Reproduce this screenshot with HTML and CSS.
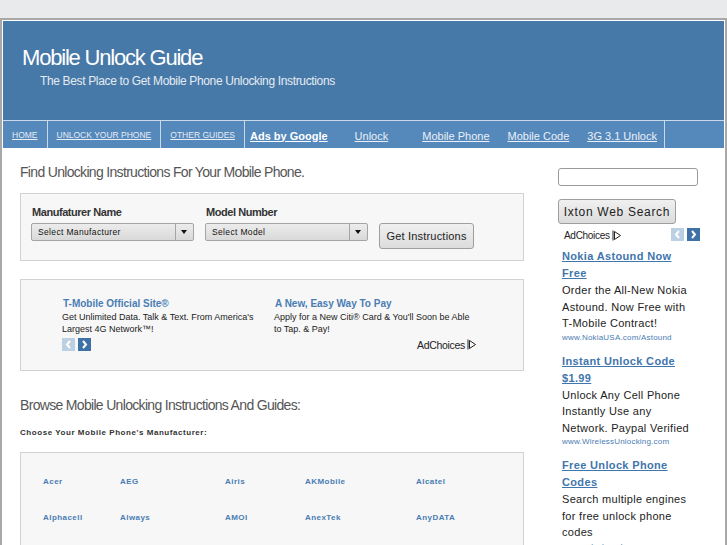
FILE: index.html
```html
<!DOCTYPE html>
<html>
<head>
<meta charset="utf-8">
<link rel="stylesheet" href="styles.css">
</head>
<body>
<div class="wrap">
  <div class="header">
    <div class="site-title">Mobile Unlock Guide</div>
    <div class="site-sub">The Best Place to Get Mobile Phone Unlocking Instructions</div>
  </div>
  <div class="nav">
    <a class="nav-item cap" href="#">HOME</a>
    <a class="nav-item cap" href="#">UNLOCK YOUR PHONE</a>
    <a class="nav-item cap" href="#">OTHER GUIDES</a>
    <div class="nav-ads">
      <a class="ads-label" href="#">Ads by Google</a>
      <a class="ad-link l1" href="#">Unlock</a>
      <a class="ad-link l2" href="#">Mobile Phone</a>
      <a class="ad-link" href="#">Mobile Code</a>
      <a class="ad-link" href="#">3G 3.1 Unlock</a>
    </div>
  </div>
  <div class="content">
    <div class="main">
      <h2 class="heading">Find Unlocking Instructions For Your Mobile Phone.</h2>
      <div class="box form-box">
        <div class="field">
          <div class="label">Manufaturer Name</div>
          <div class="select"><span>Select Manufacturer</span><i class="sel-arrow"></i></div>
        </div>
        <div class="field">
          <div class="label">Model Number</div>
          <div class="select"><span>Select Model</span><i class="sel-arrow"></i></div>
        </div>
        <button class="btn get-btn">Get Instructions</button>
      </div>

      <div class="box ad-box">
        <div class="ads-row">
          <div class="ad">
            <div class="ad-title">T-Mobile Official Site®</div>
            <div class="ad-text">Get Unlimited Data. Talk &amp; Text. From America's<br>Largest 4G Network™!</div>
          </div>
          <div class="ad ad2">
            <div class="ad-title">A New, Easy Way To Pay</div>
            <div class="ad-text">Apply for a New Citi® Card &amp; You'll Soon be Able<br>to Tap. &amp; Pay!</div>
          </div>
        </div>
        <div class="ad-foot">
          <div class="arrows">
            <span class="arr prev"><svg width="13" height="13" viewBox="0 0 13 13"><path d="M8 3 L5 6.5 L8 10" fill="none" stroke="#fff" stroke-width="2"/></svg></span>
            <span class="arr next"><svg width="13" height="13" viewBox="0 0 13 13"><path d="M5 3 L8 6.5 L5 10" fill="none" stroke="#fff" stroke-width="2"/></svg></span>
          </div>
          <div class="adchoices">AdChoices <svg width="10" height="11" viewBox="0 0 10 11"><path d="M1 0.5 V10.5 M2.5 1.5 L8.5 5.5 L2.5 9.5 Z" fill="none" stroke="#222" stroke-width="1"/></svg></div>
        </div>
      </div>

      <h2 class="heading browse">Browse Mobile Unlocking Instructions And Guides:</h2>
      <div class="choose">Choose Your Mobile Phone's Manufacturer:</div>
      <div class="box brands">
        <a href="#">Acer</a><a href="#">AEG</a><a href="#">Airis</a><a href="#">AKMobile</a><a href="#">Alcatel</a>
        <a href="#">Alphacell</a><a href="#">Always</a><a href="#">AMOI</a><a href="#">AnexTek</a><a href="#">AnyDATA</a>
      </div>
    </div>

    <div class="side">
      <div class="search-input"></div>
      <button class="btn search-btn">Ixton Web Search</button>
      <div class="side-choices">
        <div class="adchoices">AdChoices <svg width="10" height="11" viewBox="0 0 10 11"><path d="M1 0.5 V10.5 M2.5 1.5 L8.5 5.5 L2.5 9.5 Z" fill="none" stroke="#222" stroke-width="1"/></svg></div>
        <div class="arrows">
          <span class="arr prev"><svg width="13" height="13" viewBox="0 0 13 13"><path d="M8 3 L5 6.5 L8 10" fill="none" stroke="#fff" stroke-width="2"/></svg></span>
          <span class="arr next"><svg width="13" height="13" viewBox="0 0 13 13"><path d="M5 3 L8 6.5 L5 10" fill="none" stroke="#fff" stroke-width="2"/></svg></span>
        </div>
      </div>
      <div class="sad">
        <a class="sad-title" href="#">Nokia Astound Now Free</a>
        <div class="sad-text">Order the All-New Nokia Astound. Now Free with T-Mobile Contract!</div>
        <div class="sad-url">www.NokiaUSA.com/Astound</div>
      </div>
      <div class="sad">
        <a class="sad-title" href="#">Instant Unlock Code $1.99</a>
        <div class="sad-text">Unlock Any Cell Phone Instantly Use any Network. Paypal Verified</div>
        <div class="sad-url">www.WirelessUnlocking.com</div>
      </div>
      <div class="sad">
        <a class="sad-title" href="#">Free Unlock Phone Codes</a>
        <div class="sad-text">Search multiple engines for free unlock phone codes</div>
        <div class="sad-url">www.unlock-codes.com</div>
      </div>
    </div>
  </div>
</div>
</body>
</html>
```
FILE: styles.css
```css
html, body {
  margin: 0;
  padding: 0;
}
body {
  background: #e9eaec;
  font-family: "Liberation Sans", Arial, sans-serif;
  height: 545px;
  overflow: hidden;
}
.wrap {
  margin-top: 18px;
  border: 2px solid #a8a8a8;
  border-bottom: none;
  padding: 1px;
  background: #fff;
  min-height: 600px;
}
.header {
  background: #4779a8;
  height: 99px;
  box-sizing: border-box;
  padding-top: 24px;
}
.site-title {
  color: #fff;
  font-size: 22px;
  line-height: 26px;
  letter-spacing: -1.2px;
  padding-left: 19px;
}
.site-sub {
  color: #e4ebf2;
  font-size: 12px;
  line-height: 14px;
  letter-spacing: -0.35px;
  margin-top: 3px;
  padding-left: 37px;
}
.nav {
  display: flex;
  background: #5588bb;
  border-top: 1px solid #c9d9ea;
  height: 27px;
  align-items: stretch;
}
.nav-item {
  display: flex;
  align-items: center;
  color: #e6edf5;
  font-size: 8.5px;
  padding: 0 9px;
  border-right: 1px solid #c9d9ea;
  text-decoration: underline;
}
.nav-ads {
  display: flex;
  align-items: center;
  padding-left: 5px;
  padding-right: 7px;
  border-right: 1px solid #c9d9ea;
}
.ads-label {
  color: #fff;
  font-weight: bold;
  font-size: 11px;
  text-decoration: underline;
  margin-right: 27px;
  margin-top: 2px;
}
.ad-link {
  color: #eaf0f6;
  font-size: 11px;
  text-decoration: underline;
  margin-right: 18px;
  margin-top: 2px;
}
.ad-link:last-child { margin-right: 0; }
.ad-link.l1 { margin-right: 34px; }
.content {
  display: flex;
  padding-left: 17px;
  align-items: flex-start;
}
.main {
  width: 504px;
  padding-top: 15px;
}
.heading {
  margin: 0;
  font-weight: normal;
  font-size: 14px;
  line-height: 18px;
  color: #555;
  letter-spacing: -0.68px;
}
.box {
  border: 1px solid #d2d2d2;
  background: #f7f7f7;
}
.form-box {
  margin-top: 12px;
  display: flex;
  align-items: flex-start;
  padding: 11px 10px 11px 10px;
  gap: 11px;
}
.label {
  font-size: 11px;
  font-weight: bold;
  line-height: 14px;
  color: #333;
  letter-spacing: -0.45px;
  padding-left: 1px;
}
.select {
  margin-top: 4px;
  width: 163px;
  height: 18px;
  box-sizing: border-box;
  border: 1px solid #a5a5a5;
  border-radius: 2px;
  background: linear-gradient(#ececec, #d9d9d9);
  display: flex;
  align-items: center;
  position: relative;
  font-size: 8.5px;
  color: #111;
  letter-spacing: 0.35px;
}
.select span { padding-left: 6px; }
.sel-arrow {
  position: absolute;
  right: 0;
  top: 0;
  bottom: 0;
  width: 17px;
  border-left: 1px solid #a5a5a5;
}
.sel-arrow::after {
  content: "";
  position: absolute;
  left: 5px;
  top: 6px;
  border-left: 3.5px solid transparent;
  border-right: 3.5px solid transparent;
  border-top: 4px solid #111;
}
.btn {
  font-family: "Liberation Sans", Arial, sans-serif;
  background: linear-gradient(#f0f0f0, #dcdcdc);
  border: 1px solid #9e9e9e;
  border-radius: 3px;
  color: #222;
  padding: 0;
  cursor: pointer;
}
.get-btn {
  margin-top: 18px;
  width: 95px;
  height: 26px;
  font-size: 11px;
  letter-spacing: 0.2px;
}
.ad-box {
  margin-top: 18px;
  height: 92px;
  box-sizing: border-box;
  padding: 17px 0 0 41px;
}
.ads-row {
  display: flex;
}
.ad {
  width: 212px;
}
.ad2 { width: 230px; }
.ad-title {
  color: #4a7db3;
  font-weight: bold;
  font-size: 10px;
  line-height: 13px;
  margin-left: 1px;
}
.ad-text {
  font-size: 9px;
  line-height: 12px;
  color: #222;
  margin-top: 1px;
  white-space: nowrap;
}
.ad-foot {
  display: flex;
  justify-content: space-between;
  width: 415px;
  margin-top: 3px;
  align-items: center;
}
.arrows {
  display: flex;
  gap: 3px;
}
.arr {
  width: 13px;
  height: 13px;
  display: block;
}
.arr svg { display: block; }
.arr.prev { background: #bcd0e3; }
.arr.next { background: #3e71a6; }
.adchoices {
  font-size: 10.5px;
  color: #222;
  display: flex;
  align-items: center;
  gap: 2px;
  letter-spacing: -0.3px;
}
.browse {
  margin-top: 25px;
}
.choose {
  font-size: 8px;
  font-weight: bold;
  color: #333;
  letter-spacing: 0.55px;
  margin-top: 14px;
  line-height: 10px;
}
.brands {
  margin-top: 14px;
  display: grid;
  grid-template-columns: 77px 105px 80px 111px 1fr;
  row-gap: 26px;
  padding: 24px 0 30px 22px;
  line-height: 10px;
}
.brands a {
  color: #4a7db3;
  font-size: 8px;
  font-weight: bold;
  text-decoration: none;
  letter-spacing: 0.45px;
}
.side {
  margin-left: 34px;
  width: 142px;
  padding-top: 20px;
}
.search-input {
  width: 140px;
  height: 18px;
  box-sizing: border-box;
  border: 1px solid #9a9a9a;
  border-radius: 3px;
  background: #fff;
}
.search-btn {
  margin-top: 13px;
  width: 118px;
  height: 25px;
  font-size: 12px;
  letter-spacing: 0.7px;
  display: block;
}
.side-choices {
  display: flex;
  justify-content: space-between;
  align-items: center;
  margin-top: 4px;
  padding-left: 6px;
}
.side-choices .adchoices { margin-top: 2px; font-size: 10px; }
.sad {
  padding-left: 4px;
  width: 130px;
  margin-bottom: 10px;
}
.side-choices + .sad { margin-top: 7px; }
.sad-title {
  display: block;
  color: #3f76ad;
  font-weight: bold;
  font-size: 11px;
  line-height: 17px;
  letter-spacing: 0.35px;
  text-decoration: underline;
}
.sad-text {
  font-size: 11px;
  line-height: 16.5px;
  color: #222;
  letter-spacing: 0.3px;
}
.sad-url {
  font-size: 8px;
  line-height: 11px;
  color: #4a7db3;
  letter-spacing: 0.2px;
}
```
